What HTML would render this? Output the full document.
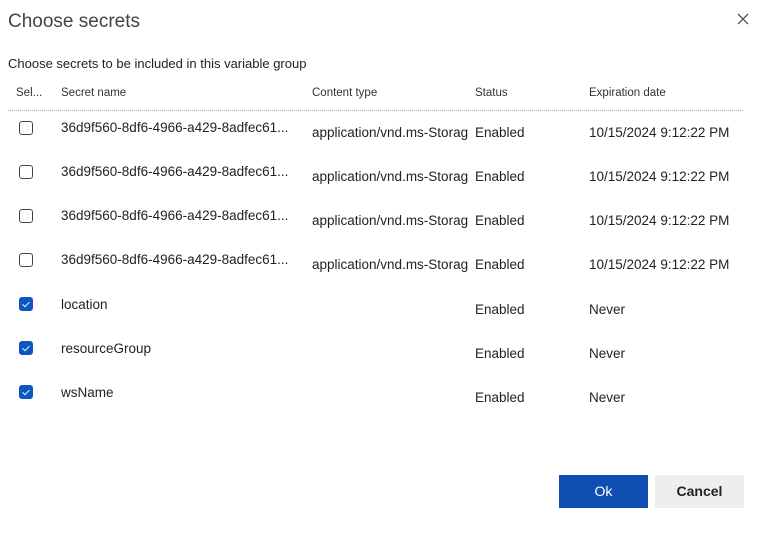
<!DOCTYPE html><html><head><style>
body{margin:0;width:763px;height:538px;background:#fff;font-family:"Liberation Sans",sans-serif;color:#222;position:relative;overflow:hidden}
.a{position:absolute;white-space:nowrap}
.cb{position:absolute;left:19px;width:14px;height:14px;border:1px solid #444;border-radius:3px;box-sizing:border-box}
.ck{background:#1155c0;border-color:#1155c0}
.ck:after{content:"";position:absolute;left:4px;top:2px;width:3px;height:6px;border:solid #cfe;border-width:0 1px 1px 0;transform:rotate(45deg)}
.t{font-size:13.5px}
.h{font-size:11.5px;color:#333}
</style></head><body>
<div class="a" style="left:8px;top:11px;font-size:19px;color:#444">Choose secrets</div>
<svg class="a" style="left:737px;top:13px" width="12" height="12" viewBox="0 0 12 12"><path d="M1 1L11 11M11 1L1 11" stroke="#555" stroke-width="1.3"/></svg>
<div class="a" style="left:8px;top:56px;font-size:13px;color:#222">Choose secrets to be included in this variable group</div>
<div class="a h" style="left:16px;top:87px">Sel...</div>
<div class="a h" style="left:61px;top:87px">Secret name</div>
<div class="a h" style="left:312px;top:87px">Content type</div>
<div class="a h" style="left:475px;top:87px">Status</div>
<div class="a h" style="left:589px;top:87px">Expiration date</div>
<div class="a" style="left:8px;top:110px;width:735px;border-top:1px dotted #aaa"></div>

<div class="cb" style="top:121px"></div><div class="a t" style="left:61px;top:120px">36d9f560-8df6-4966-a429-8adfec61...</div><div class="a t" style="left:312px;top:125px;width:156px;overflow:hidden">application/vnd.ms-Storage</div><div class="a t" style="left:475px;top:125px">Enabled</div><div class="a t" style="left:589px;top:125px">10/15/2024 9:12:22 PM</div>
<div class="cb" style="top:165px"></div><div class="a t" style="left:61px;top:164px">36d9f560-8df6-4966-a429-8adfec61...</div><div class="a t" style="left:312px;top:169px;width:156px;overflow:hidden">application/vnd.ms-Storage</div><div class="a t" style="left:475px;top:169px">Enabled</div><div class="a t" style="left:589px;top:169px">10/15/2024 9:12:22 PM</div>
<div class="cb" style="top:209px"></div><div class="a t" style="left:61px;top:208px">36d9f560-8df6-4966-a429-8adfec61...</div><div class="a t" style="left:312px;top:213px;width:156px;overflow:hidden">application/vnd.ms-Storage</div><div class="a t" style="left:475px;top:213px">Enabled</div><div class="a t" style="left:589px;top:213px">10/15/2024 9:12:22 PM</div>
<div class="cb" style="top:253px"></div><div class="a t" style="left:61px;top:252px">36d9f560-8df6-4966-a429-8adfec61...</div><div class="a t" style="left:312px;top:257px;width:156px;overflow:hidden">application/vnd.ms-Storage</div><div class="a t" style="left:475px;top:257px">Enabled</div><div class="a t" style="left:589px;top:257px">10/15/2024 9:12:22 PM</div>
<div class="cb ck" style="top:297px"></div><div class="a t" style="left:61px;top:297px">location</div><div class="a t" style="left:475px;top:302px">Enabled</div><div class="a t" style="left:589px;top:302px">Never</div>
<div class="cb ck" style="top:341px"></div><div class="a t" style="left:61px;top:341px">resourceGroup</div><div class="a t" style="left:475px;top:346px">Enabled</div><div class="a t" style="left:589px;top:346px">Never</div>
<div class="cb ck" style="top:385px"></div><div class="a t" style="left:61px;top:385px">wsName</div><div class="a t" style="left:475px;top:390px">Enabled</div><div class="a t" style="left:589px;top:390px">Never</div>

<div class="a" style="left:559px;top:475px;width:89px;height:33px;background:#0f4fb3;color:#fff;font-size:14px;text-align:center;line-height:33px">Ok</div>
<div class="a" style="left:655px;top:475px;width:89px;height:33px;background:#eee;color:#222;font-size:14px;font-weight:bold;text-align:center;line-height:33px">Cancel</div>
</body></html>
